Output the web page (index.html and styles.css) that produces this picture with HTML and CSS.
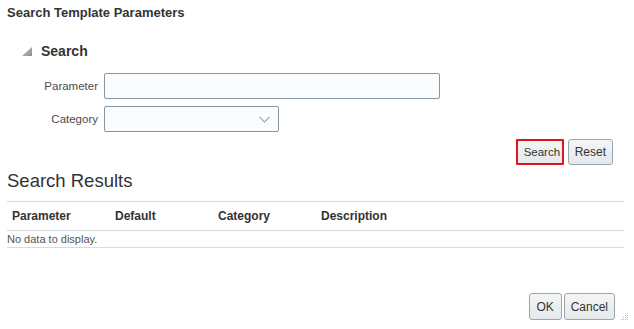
FILE: index.html
```html
<!DOCTYPE html>
<html lang="en">
<head>
  <meta charset="UTF-8">
  <title>Search Template Parameters</title>
  <link rel="stylesheet" href="styles.css">
</head>
<body>
  <div class="dialog">
    <div class="dialog-title">Search Template Parameters</div>

    <div class="panel">
      <div class="panel-header">
        <span class="disclosure"></span>
        <h2>Search</h2>
      </div>

      <div class="form">
        <label for="param">Parameter</label>
        <input type="text" id="param" class="field-text">
        <label for="category">Category</label>
        <div class="field-select" id="category">
          <svg width="11" height="7" viewBox="0 0 11 7"><path d="M0.5 0.8 L5.5 5.8 L10.5 0.8" fill="none" stroke="#a3a8ac" stroke-width="1.2"/></svg>
        </div>
      </div>

      <div class="search-actions">
        <button class="btn focused">Search</button>
        <button class="btn">Reset</button>
      </div>
    </div>

    <h2 class="results-title">Search Results</h2>
    <table class="results">
      <thead>
        <tr>
          <th>Parameter</th>
          <th>Default</th>
          <th>Category</th>
          <th>Description</th>
        </tr>
      </thead>
      <tbody>
        <tr><td colspan="4" class="empty">No data to display.</td></tr>
      </tbody>
    </table>

    <div class="footer">
      <button class="btn ok">OK</button>
      <button class="btn">Cancel</button>
    </div>

    <svg class="grip" width="9" height="9" viewBox="0 0 9 9">
      <g fill="#b5b9bc">
        <rect x="7" y="1" width="1" height="1"/>
        <rect x="5" y="3" width="1" height="1"/><rect x="7" y="3" width="1" height="1"/>
        <rect x="3" y="5" width="1" height="1"/><rect x="5" y="5" width="1" height="1"/><rect x="7" y="5" width="1" height="1"/>
        <rect x="1" y="7" width="1" height="1"/><rect x="3" y="7" width="1" height="1"/><rect x="5" y="7" width="1" height="1"/><rect x="7" y="7" width="1" height="1"/>
      </g>
    </svg>
  </div>
</body>
</html>
```

FILE: styles.css
```css
body {
  margin: 0;
  font-family: "Liberation Sans", Arial, sans-serif;
  font-size: 12px;
  color: #333;
  background: #fff;
}
.dialog {
  position: relative;
  height: 329px;
  padding: 0 10px 0 7px;
  box-sizing: border-box;
}
.dialog-title {
  padding-top: 5px;
  font-size: 13px;
  line-height: 15px;
  font-weight: bold;
  color: #333;
}
.panel-header {
  display: flex;
  align-items: center;
  height: 20px;
  margin-top: 21px;
  padding-left: 15px;
}
.disclosure {
  width: 10px;
  height: 9px;
  margin-right: 9px;
  margin-top: 1px;
  background: linear-gradient(135deg, #c4c4c4, #8e8e8e);
  clip-path: polygon(100% 0, 100% 100%, 0 100%);
}
.panel-header h2 {
  margin: 0;
  font-size: 14px;
  line-height: 20px;
  font-weight: bold;
  color: #333;
}
.form {
  display: grid;
  grid-template-columns: 91px auto;
  column-gap: 6px;
  row-gap: 7px;
  margin-top: 12px;
  align-items: center;
}
.form label {
  text-align: right;
  font-size: 11.5px;
  color: #4c4c4c;
}
.field-text, .field-select {
  height: 26px;
  box-sizing: border-box;
  border: 1px solid #8596a2;
  border-radius: 2px;
  background: #fbfcfd;
  margin: 0;
  padding: 0 5px;
  font: inherit;
}
.field-text {
  width: 336px;
}
.field-select {
  width: 175px;
  display: flex;
  align-items: center;
  justify-content: flex-end;
  padding-right: 8px;
}
.search-actions {
  display: flex;
  justify-content: flex-end;
  gap: 4px;
  margin-top: 7px;
  padding-right: 11px;
}
.btn {
  height: 26px;
  box-sizing: border-box;
  padding: 0 6px;
  font-family: "Liberation Sans", Arial, sans-serif;
  font-size: 12px;
  color: #333;
  border: 1px solid #98a5ae;
  border-radius: 3px;
  background: linear-gradient(#f3f5f6, #e5e9eb);
}
.btn.focused {
  width: 48px;
  font-size: 11.5px;
  border: 2px solid #e2131d;
  border-radius: 1px;
}
.results-title {
  margin: 5px 0 0;
  font-size: 18.5px;
  line-height: 22px;
  font-weight: normal;
  color: #333;
}
.results {
  width: 100%;
  margin-top: 9px;
  border-collapse: collapse;
}
.results th {
  width: 98px;
  height: 28px;
  padding: 0 0 0 5px;
  text-align: left;
  font-weight: bold;
  color: #333;
  border-top: 1px solid #d6dde2;
  border-bottom: 1px solid #d6dde2;
}
.results th:last-child {
  width: auto;
}
.results td.empty {
  height: 16px;
  padding: 0;
  font-size: 11px;
  color: #555;
  border-bottom: 1px solid #d6dde2;
}
.footer {
  display: flex;
  justify-content: flex-end;
  gap: 2px;
  margin-top: 45px;
  padding-right: 9px;
}
.footer .btn {
  height: 27px;
}
.btn.ok {
  width: 33px;
}
.grip {
  position: absolute;
  right: 5px;
  bottom: 8px;
}
```
